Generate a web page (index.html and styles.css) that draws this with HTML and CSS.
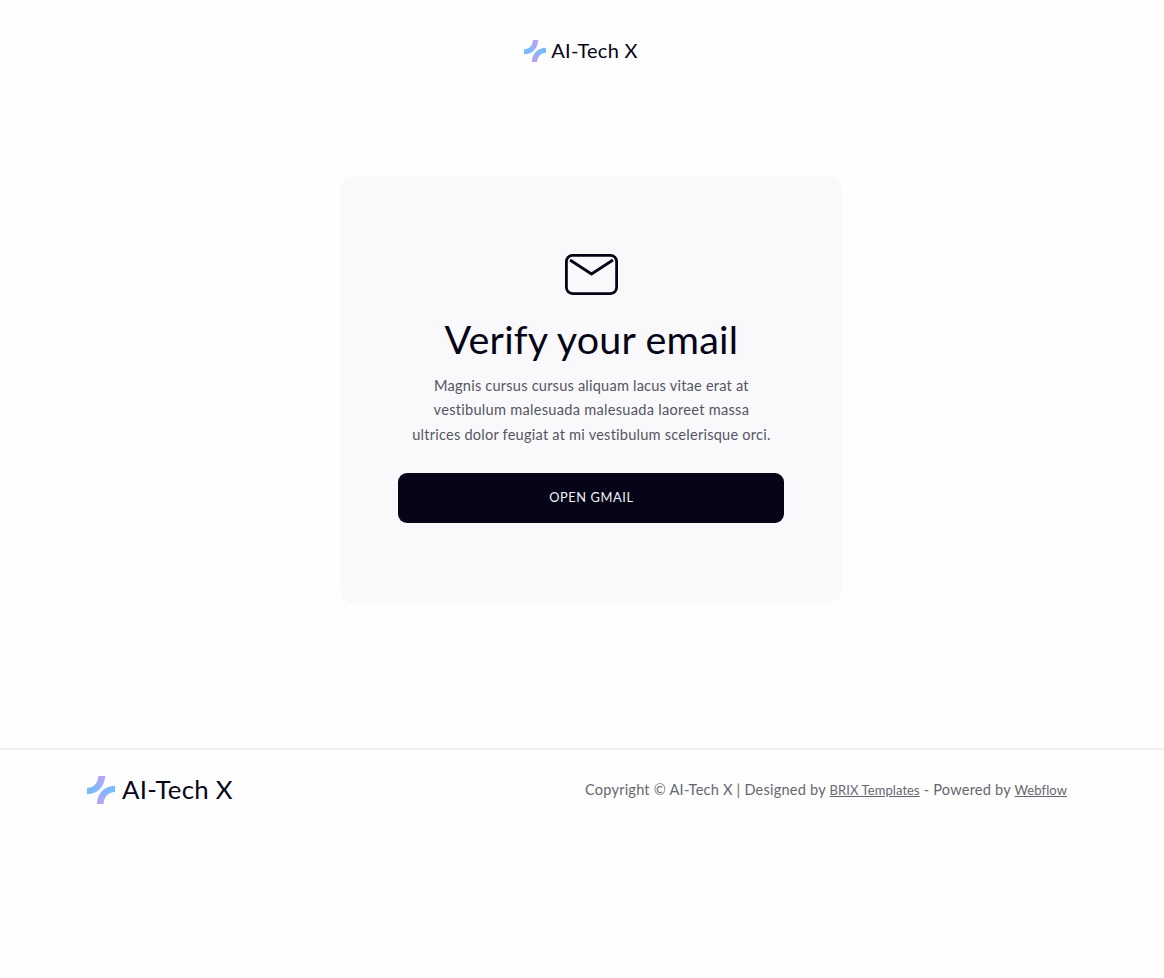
FILE: index.html
```html
<!DOCTYPE html>
<html lang="en">

<head>
  <meta charset="utf-8">
  <title>Verify your email</title>
  <link rel="stylesheet" href="styles.css">
</head>

<body>
  <header class="header">
    <a class="logo">
      <svg class="logo-icon" viewBox="0 0 27 27">
        <defs>
          <linearGradient id="top" x1="0.9" y1="0" x2="0.2" y2="1">
            <stop offset="0" stop-color="#b5a3f7" />
            <stop offset="0.35" stop-color="#a3abf8" />
            <stop offset="0.75" stop-color="#79bafd" />
          </linearGradient>
          <linearGradient id="bottom" x1="0.1" y1="1" x2="0.8" y2="0">
            <stop offset="0" stop-color="#b5a3f7" />
            <stop offset="0.35" stop-color="#a3abf8" />
            <stop offset="0.75" stop-color="#79bafd" />
          </linearGradient>
        </defs>
        <path fill="url(#top)" d="M11 0H17.5C16.7 10.5 10.5 17.2 0 17.5V11.5C6.5 11.2 10.5 7 11 0Z" />
        <path fill="url(#bottom)" d="M16 27H9.5C10.3 16.5 16.5 9.8 27 9.5V15.5C20.5 15.8 16.5 20 16 27Z" />
      </svg>
      <span class="logo-text">AI-Tech X</span>
    </a>
  </header>

  <main class="card">
    <svg class="mail-icon" viewBox="0 0 53 41" fill="none" stroke="#050517" stroke-width="2.8">
      <rect x="1.4" y="1.4" width="50.2" height="38.2" rx="6" />
      <path d="M5 6L26.5 20L48 6" stroke-linejoin="round" />
    </svg>
    <h1 class="title">Verify your email</h1>
    <p class="text">
      <span class="line1">Magnis cursus cursus aliquam lacus vitae erat at</span><br>
      <span class="line2">vestibulum malesuada malesuada laoreet massa</span><br>
      <span class="line3">ultrices dolor feugiat at mi vestibulum scelerisque orci.</span>
    </p>
    <a class="button">OPEN GMAIL</a>
  </main>

  <footer class="footer">
    <div class="footer-content">
      <a class="logo logo-large">
        <svg class="logo-icon" viewBox="0 0 27 27">
          <path fill="url(#top)" d="M11 0H17.5C16.7 10.5 10.5 17.2 0 17.5V11.5C6.5 11.2 10.5 7 11 0Z" />
          <path fill="url(#bottom)" d="M16 27H9.5C10.3 16.5 16.5 9.8 27 9.5V15.5C20.5 15.8 16.5 20 16 27Z" />
        </svg>
        <span class="logo-text">AI-Tech X</span>
      </a>
      <p class="copyright">Copyright © AI-Tech X | Designed by <a class="link">BRIX Templates</a> - Powered by <a class="link">Webflow</a></p>
    </div>
    <div class="glow"></div>
  </footer>
</body>

</html>
```

FILE: styles.css
```css
* {
  box-sizing: border-box;
}

body {
  margin: 0;
  height: 978px;
  overflow: hidden;
  background-color: #fefefe;
  color: #050517;
  font-family: Lato, "Liberation Sans", sans-serif;
}

.header {
  display: flex;
  justify-content: center;
  height: 176px;
  padding-top: 39px;
  padding-right: 2px;
}

.logo {
  display: flex;
  align-items: center;
  gap: 5px;
  height: 24px;
}

.logo-icon {
  width: 22px;
  height: 22px;
}

.logo-text {
  padding-bottom: 2px;
  font-size: 20px;
  line-height: 24px;
  letter-spacing: 0.25px;
  white-space: nowrap;
}

.logo-large {
  gap: 7px;
  height: 28px;
}

.logo-large .logo-icon {
  width: 28px;
  height: 28px;
}

.logo-large .logo-text {
  font-size: 25.8px;
  line-height: 28px;
}

.card {
  display: flex;
  flex-direction: column;
  align-items: center;
  width: 502px;
  height: 427px;
  margin-left: 340.4px;
  padding: 78px 58px;
  border-radius: 14px;
  background-color: #f9f9fc;
}

.mail-icon {
  width: 53px;
  height: 41px;
}

.title {
  margin: 20px 0 0;
  font-size: 39.5px;
  font-weight: 400;
  line-height: 48px;
  letter-spacing: 0.18px;
  white-space: nowrap;
}

.text {
  margin: 11px 0 0;
  color: #555561;
  font-size: 14.6px;
  line-height: 24.4px;
  text-align: center;
  white-space: nowrap;
}

.line1 {
  letter-spacing: 0.2px;
}

.line2 {
  letter-spacing: 0.27px;
}

.line3 {
  letter-spacing: 0.22px;
}

.button {
  width: 386px;
  height: 50px;
  margin-top: 26px;
  border-radius: 9px;
  background-color: #050517;
  color: #f3f3f8;
  font-size: 12.8px;
  line-height: 49px;
  letter-spacing: 0.6px;
  text-align: center;
}

.footer {
  margin-top: 145px;
  border-top: 2px solid #f1f1f3;
}

.footer-content {
  display: flex;
  align-items: center;
  justify-content: space-between;
  height: 79px;
  padding: 0 97px 0 87px;
}

.copyright {
  margin: 0;
  color: #666670;
  font-size: 14.6px;
  letter-spacing: 0.2px;
  white-space: nowrap;
}

.link {
  font-size: 13px;
  letter-spacing: 0.08px;
  text-decoration: underline;
}

/* faint tint under the footer */
.glow {
  width: 410px;
  height: 65px;
  margin-left: 436px;
  margin-top: -4px;
  border-radius: 0 0 205px 205px / 0 0 65px 65px;
  background-color: #fffdfe;
}
```
